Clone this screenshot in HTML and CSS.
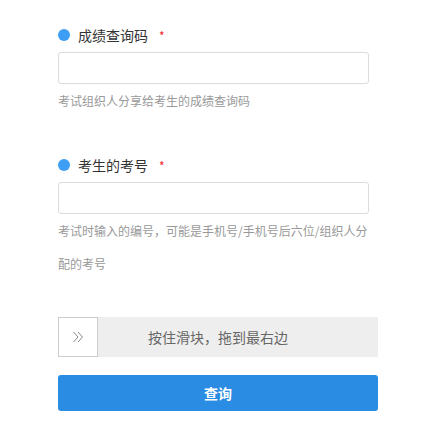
FILE: index.html
```html
<!DOCTYPE html>
<html lang="zh-CN">
<head>
<meta charset="utf-8">
<link rel="stylesheet" href="styles.css">
</head>
<body>
<form class="form">
  <div class="field">
    <div class="label"><span class="dot"></span><span class="label-text">成绩查询码</span><span class="req">*</span></div>
    <input class="input" type="text">
    <p class="hint">考试组织人分享给考生的成绩查询码</p>
  </div>
  <div class="field">
    <div class="label"><span class="dot"></span><span class="label-text">考生的考号</span><span class="req">*</span></div>
    <input class="input" type="text">
    <p class="hint">考试时输入的编号，可能是手机号/手机号后六位/组织人分配的考号</p>
  </div>
  <div class="slider">
    <div class="handle">
      <svg width="12" height="12" viewBox="0 0 12 12" fill="none" stroke="#888" stroke-width="1">
        <path d="M1.5 1 L6 6 L1.5 11"/>
        <path d="M6 1 L10.5 6 L6 11"/>
      </svg>
    </div>
    <span class="slider-text">按住滑块，拖到最右边</span>
  </div>
  <button class="btn" type="button">查询</button>
</form>
</body>
</html>
```
FILE: styles.css
```css
html, body {
  margin: 0;
  padding: 0;
  background: #fff;
}
body {
  font-family: "Microsoft YaHei", "Noto Sans CJK SC", "Noto Sans", sans-serif;
  color: #333;
}
.form {
  padding: 25px 0 0 58px;
  width: 320px;
}
.field {
  display: flex;
  flex-direction: column;
}
.field + .field {
  margin-top: 38px;
}
.label {
  display: flex;
  align-items: center;
  height: 20px;
  font-size: 14px;
  line-height: 20px;
  margin-bottom: 7px;
}
.dot {
  width: 12px;
  height: 12px;
  border-radius: 50%;
  background: #3d9ef4;
  margin-right: 8px;
}
.label-text {
  color: #333;
}
.req {
  color: #f5222d;
  font-size: 12px;
  line-height: 12px;
  margin-left: 11px;
  position: relative;
  top: 1px;
}
.input {
  box-sizing: border-box;
  width: 311px;
  height: 32px;
  border: 1px solid #dcdcdc;
  border-radius: 3px;
  margin: 0;
  padding: 0 8px;
  outline: none;
  background: #fff;
}
.hint {
  margin: 0;
  font-size: 12px;
  line-height: 33px;
  color: #999;
}
.slider {
  position: relative;
  margin-top: 37px;
  height: 40px;
  background: #eee;
  display: flex;
  align-items: center;
  justify-content: center;
}
.handle {
  position: absolute;
  left: 0;
  top: 0;
  box-sizing: border-box;
  width: 40px;
  height: 40px;
  background: #fff;
  border: 1px solid #ccc;
  display: flex;
  align-items: center;
  justify-content: center;
}
.slider-text {
  font-size: 14px;
  color: #666;
}
.btn {
  display: block;
  margin-top: 18px;
  width: 320px;
  height: 36px;
  border: none;
  border-radius: 3px;
  background: #2a8ce2;
  color: #fff;
  font-family: inherit;
  font-size: 14px;
  font-weight: bold;
  padding: 0;
}
```
